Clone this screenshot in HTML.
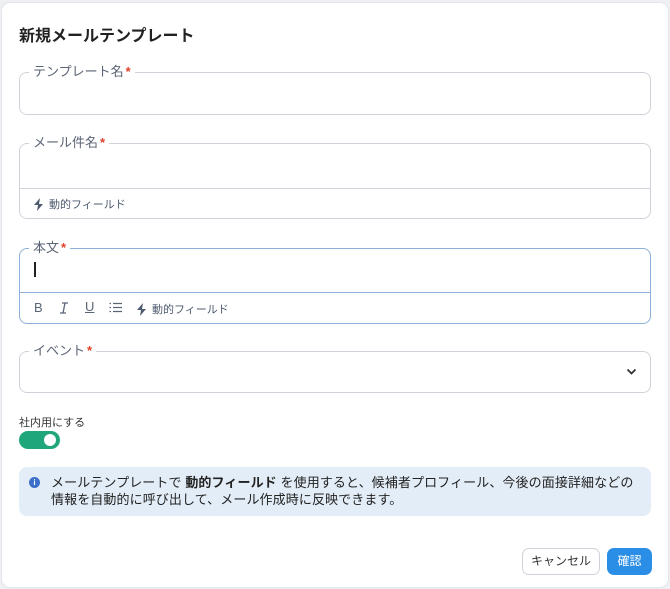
<!DOCTYPE html>
<html><head><meta charset="utf-8"><style>
*{box-sizing:border-box;margin:0;padding:0}
body{width:670px;height:589px;background:#eef0f3;font-family:"Liberation Sans","Noto Sans CJK JP",sans-serif;position:relative;overflow:hidden}
.card{position:absolute;left:1px;top:2px;width:668px;height:586px;background:#fff;border:1px solid #e3e5e8;border-radius:9px}
.a{position:absolute}
.title{left:19px;top:22px;font-size:16px;font-weight:bold;color:#222}
.box{position:absolute;left:19px;width:632px;border:1px solid #cfd3d9;border-radius:8px}
.lg{position:absolute;left:9px;top:-9px;background:#fff;padding:0 4px;font-size:13px;color:#5b6475;line-height:16px}
.lg b{color:#e0402a;font-weight:bold;margin-left:2px}
.div{position:absolute;left:0;right:0;border-top:1px solid #cfd3d9}
.dyn{position:absolute;font-size:11px;color:#4e5a6e;display:flex;align-items:center;gap:4px}
.tb{position:absolute;font-size:13px;color:#5b6475}
</style></head><body>
<div class="card"></div>
<div class="a title">新規メールテンプレート</div>

<div class="box" style="top:72px;height:43px"><div class="lg">テンプレート名<b>*</b></div></div>

<div class="box" style="top:143px;height:76px"><div class="lg">メール件名<b>*</b></div>
<div class="div" style="top:44px"></div>
<div class="dyn" style="left:13px;top:52px"><svg width="12" height="13" viewBox="0 0 12 13"><path d="M7 0L1 7h4l-1 6 6-7H6z" fill="#4e5a6e"/></svg>動的フィールド</div></div>

<div class="box" style="top:248px;height:76px;border-color:#8fb0d6"><div class="lg">本文<b>*</b></div>
<div class="a" style="left:14px;top:13px;width:1.5px;height:15px;background:#222"></div>
<div class="div" style="top:43px;border-color:#8fb0d6"></div>
<div class="tb" style="left:14px;top:51px">B</div>
<svg class="a" style="left:39px;top:53px" width="10" height="12" viewBox="0 0 10 12"><path d="M3 1h6M1 11h6M6 1L4 11" stroke="#5b6475" stroke-width="1.3" fill="none"/></svg>
<div class="tb" style="left:65px;top:50px;text-decoration:underline">U</div>
<svg class="a" style="left:89px;top:53px" width="13" height="11" viewBox="0 0 13 11"><path d="M4 1.5h9M4 5.5h9M4 9.5h9M0.5 1.5h1.5M0.5 5.5h1.5M0.5 9.5h1.5" stroke="#5b6475" stroke-width="1.2"/></svg>
<div class="dyn" style="left:116px;top:52px"><svg width="12" height="13" viewBox="0 0 12 13"><path d="M7 0L1 7h4l-1 6 6-7H6z" fill="#4e5a6e"/></svg>動的フィールド</div></div>

<div class="box" style="top:351px;height:42px"><div class="lg">イベント<b>*</b></div>
<svg class="a" style="right:13px;top:16px" width="11" height="8" viewBox="0 0 11 8"><path d="M1.5 1.5l4 4 4-4" stroke="#333" stroke-width="1.8" fill="none"/></svg></div>

<div class="a" style="left:19px;top:414px;font-size:11px;color:#333">社内用にする</div>
<div class="a" style="left:19px;top:431px;width:41px;height:18px;border-radius:9px;background:#1fa67a"></div>
<div class="a" style="left:44px;top:434px;width:12px;height:12px;border-radius:50%;background:#fff"></div>

<div class="a" style="left:19px;top:467px;width:632px;height:49px;background:#e3edf7;border-radius:8px"></div>
<div class="a" style="left:29px;top:477px;width:11px;height:11px;border-radius:50%;background:#3b6fc9;color:#fff;font-size:8px;text-align:center;line-height:11px;font-weight:bold">i</div>
<div class="a" style="left:51px;top:474px;font-size:13px;line-height:17px;color:#222;width:595px;letter-spacing:0.1px">メールテンプレートで <b>動的フィールド</b> を使用すると、候補者プロフィール、今後の面接詳細などの<br>情報を自動的に呼び出して、メール作成時に反映できます。</div>

<div class="a" style="left:522px;top:548px;width:78px;height:27px;border:1px solid #cfd3d9;border-radius:7px;font-size:12px;color:#333;text-align:center;line-height:25px">キャンセル</div>
<div class="a" style="left:607px;top:548px;width:45px;height:27px;background:#2b8ee6;border-radius:7px;font-size:12px;color:#fff;text-align:center;line-height:27px">確認</div>
</body></html>
